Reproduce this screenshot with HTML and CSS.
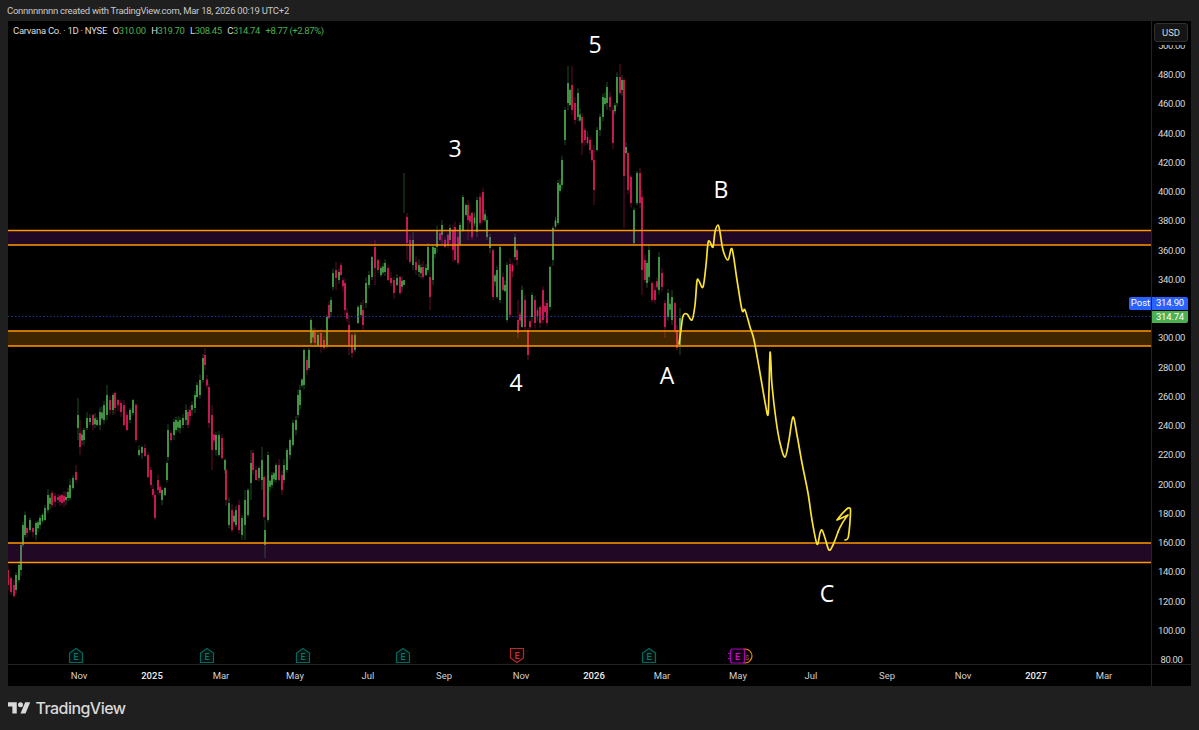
FILE: index.html
```html
<!DOCTYPE html>
<html lang="en">
<head>
<meta charset="utf-8">
<title>Carvana Co. chart</title>
<link rel="stylesheet" href="styles.css">
</head>
<body>
<header class="byline">Connnnnnnn created with TradingView.com, Mar 18, 2026 00:19 UTC+2</header>
<main class="chart">
  <section class="plot">
    <svg class="plot-svg" viewBox="8 21 1144 644" aria-hidden="true">
      <g id="candles"></g>
      <line class="post-line" x1="8" x2="1152" y1="316.5" y2="316.5"/>
      <rect class="zone zone-purple" x="8" y="230.5" width="1144" height="14.5"/>
      <rect class="zone zone-orange" x="8" y="331" width="1144" height="15"/>
      <rect class="zone zone-purple" x="8" y="543" width="1144" height="19"/>
      <path class="zone-line" d="M8 230.5H1152M8 245H1152M8 331H1152M8 346H1152M8 543H1152M8 562.500H1152"/>
      <path id="sketch" class="sketch"/>
      <path class="sketch" d="M838 532 Q842 522 848 515 Q842 518 837 520 Q843 512 848 508 Q851 507 850.500 512 Q850 526 848.500 536 Q848 540 845 540"/>
      <g class="ev ev-green" transform="translate(76 0)"><path d="M-6.500 662.500V653L0 648.500L6.500 653V662.500Z"/><text x="0" y="659.500">E</text></g>
      <g class="ev ev-green" transform="translate(207 0)"><path d="M-6.500 662.500V653L0 648.500L6.500 653V662.500Z"/><text x="0" y="659.500">E</text></g>
      <g class="ev ev-green" transform="translate(303 0)"><path d="M-6.500 662.500V653L0 648.500L6.500 653V662.500Z"/><text x="0" y="659.500">E</text></g>
      <g class="ev ev-green" transform="translate(403 0)"><path d="M-6.500 662.500V653L0 648.500L6.500 653V662.500Z"/><text x="0" y="659.500">E</text></g>
      <g class="ev ev-red" transform="translate(517 0)"><path d="M-6.500 648.500H6.500V658L0 662.500L-6.500 658Z"/><text x="0" y="658.500">E</text></g>
      <g class="ev ev-green" transform="translate(649 0)"><path d="M-6.500 662.500V653L0 648.500L6.500 653V662.500Z"/><text x="0" y="659.500">E</text></g>
      <g class="ev ev-orange"><circle cx="745" cy="656" r="7"/><text x="747" y="659.500">$</text></g>
      <g class="ev ev-magenta"><rect x="730.500" y="649" width="14" height="14" rx="2"/><path class="dash" d="M728 653.500H731M729 656H731M728 658.500H731"/><text x="737.500" y="659.500">E</text></g>
    </svg>
    <div class="legend">
      <span class="legend-name">Carvana Co. · 1D · NYSE</span>
      <span class="ohlc"><b>O</b>310.00</span>
      <span class="ohlc"><b>H</b>319.70</span>
      <span class="ohlc"><b>L</b>308.45</span>
      <span class="ohlc"><b>C</b>314.74</span>
      <span class="ohlc">+8.77 (+2.87%)</span>
    </div>
    <span class="wave wave-5">5</span>
    <span class="wave wave-3">3</span>
    <span class="wave wave-b">B</span>
    <span class="wave wave-4">4</span>
    <span class="wave wave-a">A</span>
    <span class="wave wave-c">C</span>
    <span class="tag tag-post">Post</span>
  </section>
  <aside class="price-axis">
    <div class="ticks">
      <span>500.00</span><span>480.00</span><span>460.00</span><span>440.00</span><span>420.00</span><span>400.00</span>
      <span>380.00</span><span>360.00</span><span>340.00</span><span></span><span>300.00</span><span>280.00</span>
      <span>260.00</span><span>240.00</span><span>220.00</span><span>200.00</span><span>180.00</span><span>160.00</span>
      <span>140.00</span><span>120.00</span><span>100.00</span><span>80.00</span>
    </div>
    <button class="usd" type="button">USD</button>
    <span class="tag tag-price tag-blue">314.90</span>
    <span class="tag tag-price tag-green">314.74</span>
  </aside>
  <nav class="time-axis">
    <span>Nov</span><span class="strong">2025</span><span>Mar</span><span>May</span><span>Jul</span><span>Sep</span><span>Nov</span><span class="strong">2026</span><span>Mar</span><span>May</span><span>Jul</span><span>Sep</span><span>Nov</span><span class="strong">2027</span><span>Mar</span>
  </nav>
  <div class="corner"></div>
</main>
<footer class="brand">
  <svg class="brand-logo" viewBox="0 4 36 18" aria-hidden="true"><path d="M14 22H7V11H0V4h14v18zM28 22h-8l7.500-18h8L28 22z"/><circle cx="20" cy="8" r="4"/></svg>
  <span class="brand-name">TradingView</span>
</footer>
<script src="chart.js"></script>
</body>
</html>
```
FILE: styles.css
```css
* { box-sizing: border-box; }
html, body { margin: 0; height: 730px; overflow: hidden; }
body { background: #1f1f1f; font-family: "Roboto", "Liberation Sans", sans-serif; color: #d1d4dc; }

.byline { height: 21px; padding: 5px 0 0 7px; font-size: 9.500px; line-height: 12px; color: #c8c8c8; white-space: nowrap; letter-spacing: -.27px; }

.chart { display: grid; grid-template-columns: 1144px 39px; grid-template-rows: 644px 21px; margin: 0 8px; background: #000; }

.plot { position: relative; overflow: hidden; border-right: 1px solid #242424; border-bottom: 1px solid #242424; }
.plot-svg { display: block; width: 1144px; height: 644px; }

.body-g { fill: #4caf50; }
.wick-g { fill: #2c7030; }
.body-r { fill: #e91e63; }
.wick-r { fill: #8f1343; }

.post-line { stroke: #1b3a8c; stroke-width: 1; stroke-dasharray: 1.500 2; }
.zone-purple { fill: rgba(156, 39, 176, .21); }
.zone-orange { fill: rgba(255, 152, 0, .25); }
.zone-line { fill: none; stroke: #ff9800; stroke-width: 1.500; }
.sketch { fill: none; stroke: #fbe32f; stroke-width: 1.700; stroke-linejoin: round; stroke-linecap: round; }

.ev text { font-family: "Roboto", "Liberation Sans", sans-serif; font-size: 9px; font-weight: 500; text-anchor: middle; }
.ev path, .ev rect, .ev circle { stroke-width: 1.200; }
.ev-green path { fill: #04110e; stroke: #00695c; }
.ev-green text { fill: #00796b; }
.ev-red path { fill: #140404; stroke: #b22833; }
.ev-red text { fill: #c62f3c; }
.ev-orange circle { fill: #000; stroke: #e68a00; }
.ev-orange text { fill: #8a5a10; font-size: 8px; }
.ev-magenta rect { fill: #100012; stroke: #a800b8; }
.ev-magenta .dash { fill: none; stroke: #c000d0; stroke-width: 1; }
.ev-magenta text { fill: #d400e6; }

.legend { position: absolute; left: 5px; top: 4px; display: flex; gap: 5.500px; font-size: 9.500px; line-height: 12px; color: #4caf50; white-space: nowrap; letter-spacing: -.38px; }
.legend-name { color: #dcdcdc; letter-spacing: -.28px; }
.ohlc b { font-weight: 400; color: #dcdcdc; }

.wave { position: absolute; font-family: "Open Sans", "Liberation Sans", sans-serif; font-size: 23px; line-height: 26px; color: #fff; transform: translate(-50%, -50%); }
.wave-5 { left: 587px; top: 23px; }
.wave-3 { left: 447px; top: 127px; }
.wave-b { left: 713px; top: 168px; }
.wave-4 { left: 508px; top: 361px; }
.wave-a { left: 659px; top: 354px; }
.wave-c { left: 819px; top: 572px; }

.tag { font-size: 9.500px; line-height: 12px; color: #fff; text-align: center; }
.tag-post { position: absolute; right: -1px; top: 276px; width: 23px; height: 13px; background: #2962ff; border-radius: 2px 0 0 2px; }

.price-axis { position: relative; overflow: hidden; border-bottom: 1px solid #242424; }
.ticks { display: flex; flex-direction: column; padding-top: 9.800px; }
.ticks span { flex: 0 0 29.250px; display: flex; align-items: center; justify-content: center; font-size: 9.500px; letter-spacing: -.35px; color: #d8d8d8; }
.usd { position: absolute; left: 2px; top: 2px; width: 34px; height: 19px; padding: 0; background: #151515; border: 1px solid #303030; border-radius: 3px; box-shadow: 0 1px 0 2px #000; color: #d8d8d8; font: 9.500px "Roboto", "Liberation Sans", sans-serif; }
.tag-price { position: absolute; left: 0; width: 36px; letter-spacing: -.2px; }
.tag-blue { top: 276px; height: 13px; background: #2962ff; border-radius: 0 2px 0 0; }
.tag-green { top: 290px; height: 12px; background: #4caf50; border-radius: 0 0 2px 0; }

.time-axis { display: grid; grid-template-columns: 73px 69px 74px 73px 76px 77px 73px 68px 76px 73px 76px 76px 73px 68px auto; align-items: center; padding-left: 71px; font-size: 9.500px; color: #d0d0d0; border-right: 1px solid #242424; }
.time-axis span { justify-self: start; transform: translateX(-50%); }
.time-axis .strong { color: #f0f0f0; font-weight: 500; }
.corner { background: #000; }

.brand { display: flex; align-items: center; gap: 5px; height: 44px; padding: 0 0 0 8px; }
.brand-logo { width: 22.500px; height: 11.500px; fill: #d9d9d9; }
.brand-name { font-family: "Inter", "Liberation Sans", sans-serif; font-size: 16px; font-weight: 500; color: #d9d9d9; letter-spacing: -.55px; }
```
FILE: chart.js
```js
// Daily bars as x,bodyTop,bodyBottom,colour[,wickTop,wickBottom], in page pixels.
var BARS = "8,570,585,r 11,578,592,r 14,585,596,r 16,575,590,g 19,565,580,g 21,545,570,g 23,525,545,g 25,515,535,g 27,528,533,r 30,520,530,g 33,528,532,r 36,523,535,g 40,518,525,g 45,508,520,g 48,495,510,g 52,493,505,r 58,497,500,r 62,495,503,r 66,497,500,g 70,485,498,g 73,478,488,g 76,472,480,r,465,483 " +
"78,415,428,g,398,440 80,433,447,r,420,455 84,430,440,g 87,418,428,g 90,418,422,g 93,415,425,r 97,420,425,g 100,412,425,g 104,405,420,g 107,395,415,g,385,420 110,400,410,r 113,395,410,g 115,393,408,r 118,400,405,r 121,403,412,r 124,405,425,r 127,415,430,r 130,410,420,g 133,400,413,g 136,405,440,r 139,450,455,g 142,447,453,g 145,448,456,r 148,455,477,r 151,470,485,r 155,495,518,r 158,480,490,r 162,490,500,g 165,488,495,g 167,463,480,g 168,430,457,g 171,433,440,r 174,422,435,g 176,420,430,g 180,420,428,g 183,418,425,g 186,410,420,g 188,412,425,r 192,405,410,g 195,395,408,g 197,385,397,g 200,380,395,g 203,358,380,g 205,355,365,r,348,370 " +
"209,387,423,r 212,415,450,r,405,470 216,435,450,g 219,435,455,g 222,438,458,r 225,460,470,g 226,470,500,r 229,503,525,g 232,510,530,r 236,510,525,g 239,505,530,r 242,518,535,g 245,500,525,g,490,540 248,490,515,g 251,463,483,g,450,500 253,453,470,r 256,470,480,r 259,468,478,g 262,460,480,g,447,490 264,477,517,r 265,530,545,g,520,558 268,455,520,g 272,475,485,g 276,465,480,g 279,465,480,r 282,475,490,r 284,465,480,g 287,450,470,g 290,440,455,g 293,423,445,g 296,420,430,g 298,395,415,g 300,390,405,g " +
"304,350,385,g 307,360,370,r 309,350,368,g 311,320,343,g 315,332,343,r 318,335,345,g 321,333,347,r 324,340,348,r 327,317,345,g 329,305,318,r 331,300,312,g 333,273,287,g 336,270,278,r,262,290 339,272,280,g 341,265,275,r 345,283,310,r 349,325,345,r,315,355 352,335,353,r 355,335,350,g 358,307,323,g 361,305,315,g 363,310,325,r,300,330 366,283,303,g 369,275,285,g 372,257,277,g 375,247,268,r,240,285 378,260,270,r 381,268,275,g 385,263,272,g 388,268,280,r 391,278,283,r 394,280,293,r 397,278,285,g 400,277,293,r 404,280,285,g,173,213 407,217,243,r,213,260 410,240,262,r 413,240,265,g,232,270 416,262,270,r 419,265,272,g 423,267,277,r 426,268,275,g 428,247,270,g 430,277,297,r,270,310 433,247,280,g 437,230,247,g 440,233,240,r 442,225,235,g,220,245 445,240,247,r 448,235,245,r 450,228,240,g 453,230,250,r,225,262 455,227,260,r 458,237,263,r,230,265 460,225,245,g 463,197,230,g,195,232 466,205,215,g 468,205,220,r,200,240 472,213,237,r 477,200,232,g 480,197,223,r 483,192,220,r 487,220,237,g 490,237,248,g 493,250,297,r 497,270,297,g 500,247,300,g,245,303 503,277,290,r 507,265,320,g 510,264,315,r 515,237,257,g 517,250,260,r 518,320,333,r,300,338 522,290,327,g 525,300,327,r 528,330,355,r,328,360 532,295,317,g 535,300,323,r 540,307,323,r 543,290,320,r 547,303,323,r 550,267,307,g 553,228,260,g 558,183,223,g,180,225 " +
"562,160,185,g 565,110,140,g 568,83,103,g,66,110 570,90,105,g 572,85,110,r,66,115 575,103,120,r 578,93,117,g 582,117,143,r,113,155 585,130,140,r 590,140,150,r 592,150,160,r 594,160,190,r,145,205 597,130,150,g 600,117,130,g 603,97,117,g 607,87,103,g,82,110 610,97,107,r 613,110,143,r 617,77,103,g 620,77,93,r,64,95 622,80,90,g 624,80,176,r,78,228 626,147,153,g 628,153,190,r 631,177,203,r 634,210,243,g 637,173,203,g 640,173,203,r 642,197,270,r,190,295 645,260,280,r 647,263,283,g 649,250,277,g 652,283,300,r 655,290,300,r 659,257,290,g 662,273,287,r 665,303,327,r,300,338 668,293,317,g 672,297,320,g,290,325 675,303,330,r 677,330,348,r,325,350 680,318,345,g,308,355";

function seeded(seed) {
  return function () {
    seed = (seed * 9301 + 49297) % 233280;
    return seed / 233280;
  };
}

function addRect(group, x, y, w, h, cls) {
  var r = document.createElementNS("http://www.w3.org/2000/svg", "rect");
  r.setAttribute("x", x);
  r.setAttribute("y", y);
  r.setAttribute("width", w);
  r.setAttribute("height", Math.max(h, 0.6));
  r.setAttribute("class", cls);
  group.appendChild(r);
}

function drawBar(group, bar, rnd) {
  var wickTop = bar.wt || bar.t - 1 - rnd() * 5;
  var wickBot = bar.wb || bar.b + 1 + rnd() * 5;
  addRect(group, bar.x - 0.35, wickTop, 0.7, wickBot - wickTop, "wick-" + bar.c);
  addRect(group, bar.x - 0.8, bar.t, 1.6, bar.b - bar.t, "body-" + bar.c);
}

function smoothPath(p) {
  var d = "M" + p[0][0] + " " + p[0][1];
  for (var i = 0; i < p.length - 1; i++) {
    var a = p[Math.max(i - 1, 0)], b = p[i], c = p[i + 1], e = p[Math.min(i + 2, p.length - 1)];
    d += " C" + (b[0] + (c[0] - a[0]) / 6) + " " + (b[1] + (c[1] - a[1]) / 6) + " " +
         (c[0] - (e[0] - b[0]) / 6) + " " + (c[1] - (e[1] - b[1]) / 6) + " " + c[0] + " " + c[1];
  }
  return d;
}

var rnd = seeded(17);
var group = document.getElementById("candles");
var bars = BARS.split(" ").map(function (s) {
  var f = s.split(",");
  return { x: +f[0], t: +f[1], b: +f[2], c: f[3], wt: +f[4] || 0, wb: +f[5] || 0 };
});
bars.forEach(function (bar, i) {
  var next = bars[i + 1];
  drawBar(group, bar, rnd);
  if (next && next.x - bar.x >= 4 && next.x - bar.x < 30) {
    var mid = (bar.t + bar.b + next.t + next.b) / 4;
    drawBar(group, { x: (bar.x + next.x) / 2, t: mid - 3, b: mid + 3, c: rnd() > 0.5 ? bar.c : next.c, wt: 0, wb: 0 }, rnd);
  }
});

document.getElementById("sketch").setAttribute("d", smoothPath([
  [679, 344], [681, 330], [683, 316], [687, 314], [692, 320], [695, 305], [697, 281], [699, 281], [703, 287],
  [706, 265], [708, 243], [710, 242], [713, 247], [715, 232], [718, 225], [720, 232], [723, 250], [728, 260], [732, 249],
  [737, 280], [742, 310], [745, 310], [750, 327], [754, 340], [760, 373], [765, 402], [768, 415], [769, 390],
  [770, 353], [771, 365], [772, 385], [776, 420], [780, 443], [785, 457], [789, 440], [793, 417], [797, 435], [802, 463],
  [808, 493], [812, 520], [817, 544], [820, 533], [822, 530], [825, 538], [829, 550], [833, 545], [838, 532]
]));
```
